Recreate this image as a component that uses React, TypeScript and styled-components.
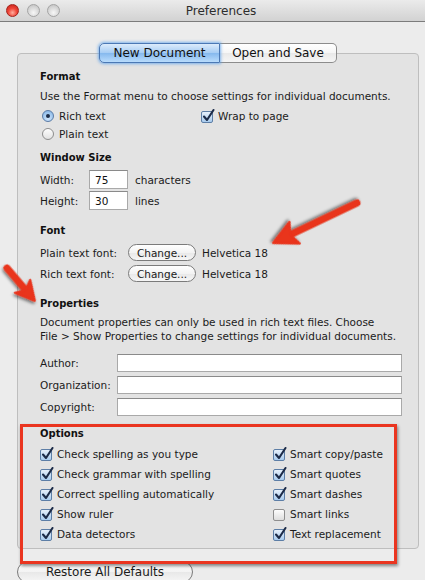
import React from "react";
import styled, { createGlobalStyle } from "styled-components";

const GlobalStyle = createGlobalStyle`
  html, body {
    margin: 0;
    padding: 0;
  }
  body {
    background: #ececec;
    font-family: "DejaVu Sans", "Noto Sans", sans-serif;
    font-size: 10.5px;
    color: #1b1b1b;
    overflow: hidden;
  }
`;

const Window = styled.div`
  position: relative;
  width: 425px;
  height: 580px;
  overflow: hidden;
  background: #ececec;
`;

const TitleBar = styled.div`
  height: 21px;
  display: grid;
  grid-template-columns: 1fr auto 1fr;
  align-items: center;
  padding-left: 17px;
  background: linear-gradient(#ebebeb, #d2d2d2);
  border-bottom: 1px solid #7c7c7c;
`;

const Lights = styled.div`
  display: flex;
  gap: 7.5px;
  margin-left: -11px;
`;

const Light = styled.span<{ $red?: boolean }>`
  width: 13px;
  height: 13px;
  border-radius: 50%;
  box-sizing: border-box;
  border: 1px solid ${(p) => (p.$red ? "#a3231c" : "#a4a4a4")};
  background: ${(p) =>
    p.$red
      ? "radial-gradient(circle at 50% 70%, #ffb0a0 0%, #f0473a 45%, #c21c14 100%)"
      : "radial-gradient(circle at 50% 70%, #f7f7f7 0%, #d7d7d7 55%, #bcbcbc 100%)"};
`;

const Title = styled.div`
  font-size: 12px;
  color: #2c2c2c;
`;

const Content = styled.div`
  padding: 21px 6px 0 17px;
`;

const TabRow = styled.div`
  position: relative;
  z-index: 1;
  display: flex;
  justify-content: center;
  width: 402px;
`;

const Tab = styled.div<{ $active?: boolean; $w: number }>`
  width: ${(p) => p.$w}px;
  height: 20px;
  box-sizing: border-box;
  display: flex;
  align-items: center;
  justify-content: center;
  font-size: 12px;
  color: #111;
  border: 1px solid ${(p) => (p.$active ? "#4b78b4" : "#8c8c8c")};
  background: ${(p) =>
    p.$active
      ? "linear-gradient(#dcebfb, #a7cdf4 48%, #86b9ee 52%, #b9dcfc)"
      : "linear-gradient(#ffffff, #f6f6f6 48%, #e9e9e9 52%, #f5f5f5)"};
  box-shadow: ${(p) => (p.$active ? "0 0 3px 1px rgba(90,160,235,0.75)" : "none")};
  z-index: ${(p) => (p.$active ? 1 : 0)};
  &:first-child {
    border-radius: 5px 0 0 5px;
  }
  &:last-child {
    border-radius: 0 5px 5px 0;
    border-left: none;
  }
`;

const Panel = styled.div`
  width: 402px;
  box-sizing: border-box;
  margin-top: -10px;
  padding: 15px 16px 4px 22px;
  background: #e3e3e3;
  border: 1px solid #bebebe;
  border-radius: 4px;
`;

const Heading = styled.div<{ $gap?: number }>`
  font-size: 10px;
  font-weight: bold;
  line-height: 16px;
  margin-top: ${(p) => p.$gap ?? 0}px;
  color: #111;
`;

const Note = styled.p<{ $lh?: number }>`
  margin: 4px 0 0;
  line-height: ${(p) => p.$lh ?? 14}px;
`;

const FormatGrid = styled.div`
  display: grid;
  grid-template-columns: 161px auto;
  grid-auto-rows: 18px;
  margin-top: 4px;
`;

const Choice = styled.div`
  display: flex;
  align-items: center;
  gap: 5px;
  white-space: nowrap;
`;

const Radio = styled.span<{ $on?: boolean }>`
  position: relative;
  width: 12px;
  height: 12px;
  margin-left: 2px;
  box-sizing: border-box;
  border-radius: 50%;
  border: 1px solid ${(p) => (p.$on ? "#5a7ba6" : "#8d8d8d")};
  background: ${(p) =>
    p.$on
      ? "radial-gradient(circle at 50% 75%, #cfe4fb, #9ec6ee 60%, #7eaee0)"
      : "linear-gradient(#fdfdfd, #e2e2e2)"};
  &::after {
    content: "";
    display: ${(p) => (p.$on ? "block" : "none")};
    position: absolute;
    left: 3px;
    top: 3px;
    width: 4px;
    height: 4px;
    border-radius: 50%;
    background: #1d2d48;
  }
`;

const Box = styled.span<{ $on?: boolean }>`
  position: relative;
  flex: none;
  width: 12px;
  height: 12px;
  margin-top: 1px;
  box-sizing: border-box;
  border-radius: 2px;
  border: 1px solid ${(p) => (p.$on ? "#5d7ea6" : "#8e8e8e")};
  background: ${(p) =>
    p.$on ? "linear-gradient(#e6f0fb, #a8cbee)" : "linear-gradient(#fdfdfd, #dedede)"};
`;

const Tick = styled.svg`
  position: absolute;
  left: -1px;
  top: -4px;
  overflow: visible;
`;

const SizeGrid = styled.div`
  display: grid;
  grid-template-columns: 42px 39px auto;
  column-gap: 7px;
  grid-auto-rows: 21px;
  align-items: center;
  margin-top: 3px;
`;

const Field = styled.input<{ $h?: number }>`
  box-sizing: border-box;
  width: 100%;
  height: ${(p) => p.$h ?? 19}px;
  margin: 0;
  padding: 0 5px;
  font: inherit;
  color: #111;
  background: #fff;
  border: 1px solid #a9a9a9;
  border-top-color: #8a8a8a;
  outline: none;
`;

const FontGrid = styled.div`
  display: grid;
  grid-template-columns: 82px 68px 1fr;
  column-gap: 6px;
  grid-auto-rows: 21px;
  align-items: center;
  margin-top: 3px;
`;

const Pill = styled.div`
  height: 17px;
  box-sizing: border-box;
  display: flex;
  align-items: center;
  justify-content: center;
  border-radius: 9px;
  border: 1px solid #7b7b7b;
  background: linear-gradient(#ffffff, #f3f3f3 50%, #e8e8e8 51%, #f6f6f6);
`;

const PropGrid = styled.div`
  display: grid;
  grid-template-columns: 74px 1fr;
  column-gap: 3px;
  grid-auto-rows: 22px;
  align-items: center;
  margin-top: 9px;
`;

const OptionsGrid = styled.div`
  display: grid;
  grid-template-columns: 233px auto;
  grid-auto-rows: 20px;
  align-items: center;
  margin-top: 2px;
`;

const Restore = styled.div`
  width: 176px;
  height: 22px;
  margin-top: 12px;
  box-sizing: border-box;
  display: flex;
  align-items: center;
  justify-content: center;
  font-size: 12px;
  border-radius: 11px;
  border: 1px solid #7b7b7b;
  background: linear-gradient(#ffffff, #f3f3f3 50%, #e8e8e8 51%, #f6f6f6);
`;

const Callout = styled.div`
  position: absolute;
  left: 20px;
  top: 424px;
  width: 377px;
  height: 140px;
  box-sizing: border-box;
  border: 3px solid #ea3520;
  box-shadow: 1px 2px 3px rgba(0, 0, 0, 0.45);
  pointer-events: none;
`;

const Overlay = styled.svg`
  position: absolute;
  left: 0;
  top: 0;
  pointer-events: none;
`;

function CheckBox({ on }: { on: boolean }) {
  return (
    <Box $on={on}>
      {on && (
        <Tick width="15" height="15" viewBox="0 0 15 15">
          <path
            d="M3 8.5 L6 12 L12.5 2"
            fill="none"
            stroke="#1c2b48"
            strokeWidth="2.1"
            strokeLinecap="round"
            strokeLinejoin="round"
          />
        </Tick>
      )}
    </Box>
  );
}

function Arrow({
  x,
  y,
  angle,
  length,
  head,
  half,
}: {
  x: number;
  y: number;
  angle: number;
  length: number;
  head: number;
  half: number;
}) {
  const L = length;
  return (
    <g transform={`translate(${x} ${y}) rotate(${angle})`} filter="url(#arrowShadow)">
      <line x1="0" y1="0" x2={L - head + 4} y2="0" stroke="#e9341d" strokeWidth="7" strokeLinecap="round" />
      <polygon
        points={`${L},0 ${L - head - 2},${-half} ${L - head + 3},0 ${L - head - 2},${half}`}
        fill="#e9341d"
        stroke="#e9341d"
        strokeWidth="2"
        strokeLinejoin="round"
      />
    </g>
  );
}

const leftOptions: [string, boolean][] = [
  ["Check spelling as you type", true],
  ["Check grammar with spelling", true],
  ["Correct spelling automatically", true],
  ["Show ruler", true],
  ["Data detectors", true],
];

const rightOptions: [string, boolean][] = [
  ["Smart copy/paste", true],
  ["Smart quotes", true],
  ["Smart dashes", true],
  ["Smart links", false],
  ["Text replacement", true],
];

export default function App() {
  return (
    <Window>
      <GlobalStyle />
      <TitleBar>
        <Lights>
          <Light $red />
          <Light />
          <Light />
        </Lights>
        <Title>Preferences</Title>
        <span />
      </TitleBar>

      <Content>
        <TabRow>
          <Tab $active $w={121}>New Document</Tab>
          <Tab $w={117}>Open and Save</Tab>
        </TabRow>

        <Panel>
          <Heading>Format</Heading>
          <Note>Use the Format menu to choose settings for individual documents.</Note>
          <FormatGrid>
            <Choice>
              <Radio $on />
              Rich text
            </Choice>
            <Choice>
              <CheckBox on />
              Wrap to page
            </Choice>
            <Choice>
              <Radio />
              Plain text
            </Choice>
          </FormatGrid>

          <Heading $gap={7}>Window Size</Heading>
          <SizeGrid>
            <span>Width:</span>
            <Field readOnly value="75" />
            <span>characters</span>
            <span>Height:</span>
            <Field readOnly value="30" />
            <span>lines</span>
          </SizeGrid>

          <Heading $gap={12}>Font</Heading>
          <FontGrid>
            <span>Plain text font:</span>
            <Pill>Change...</Pill>
            <span>Helvetica 18</span>
            <span>Rich text font:</span>
            <Pill>Change...</Pill>
            <span>Helvetica 18</span>
          </FontGrid>

          <Heading $gap={12}>Properties</Heading>
          <Note $lh={13.5}>
            Document properties can only be used in rich text files. Choose
            <br />
            File &gt; Show Properties to change settings for individual documents.
          </Note>
          <PropGrid>
            <span>Author:</span>
            <Field readOnly value="" $h={18} />
            <span>Organization:</span>
            <Field readOnly value="" $h={18} />
            <span>Copyright:</span>
            <Field readOnly value="" $h={18} />
          </PropGrid>

          <Heading $gap={8}>Options</Heading>
          <OptionsGrid>
            {leftOptions.map(([label, on], i) => (
              <React.Fragment key={label}>
                <Choice>
                  <CheckBox on={on} />
                  {label}
                </Choice>
                <Choice>
                  <CheckBox on={rightOptions[i][1]} />
                  {rightOptions[i][0]}
                </Choice>
              </React.Fragment>
            ))}
          </OptionsGrid>
        </Panel>

        <Restore>Restore All Defaults</Restore>
      </Content>

      <Callout />

      <Overlay width="425" height="580" viewBox="0 0 425 580">
        <defs>
          <filter id="arrowShadow" x="-20%" y="-20%" width="140%" height="160%">
            <feDropShadow dx="1" dy="2" stdDeviation="1.4" floodColor="#000" floodOpacity="0.5" />
          </filter>
        </defs>
        <Arrow x={357} y={203} angle={154.5} length={93} head={22} half={12} />
        <Arrow x={7} y={268} angle={49.7} length={43} head={17} half={10} />
      </Overlay>
    </Window>
  );
}
